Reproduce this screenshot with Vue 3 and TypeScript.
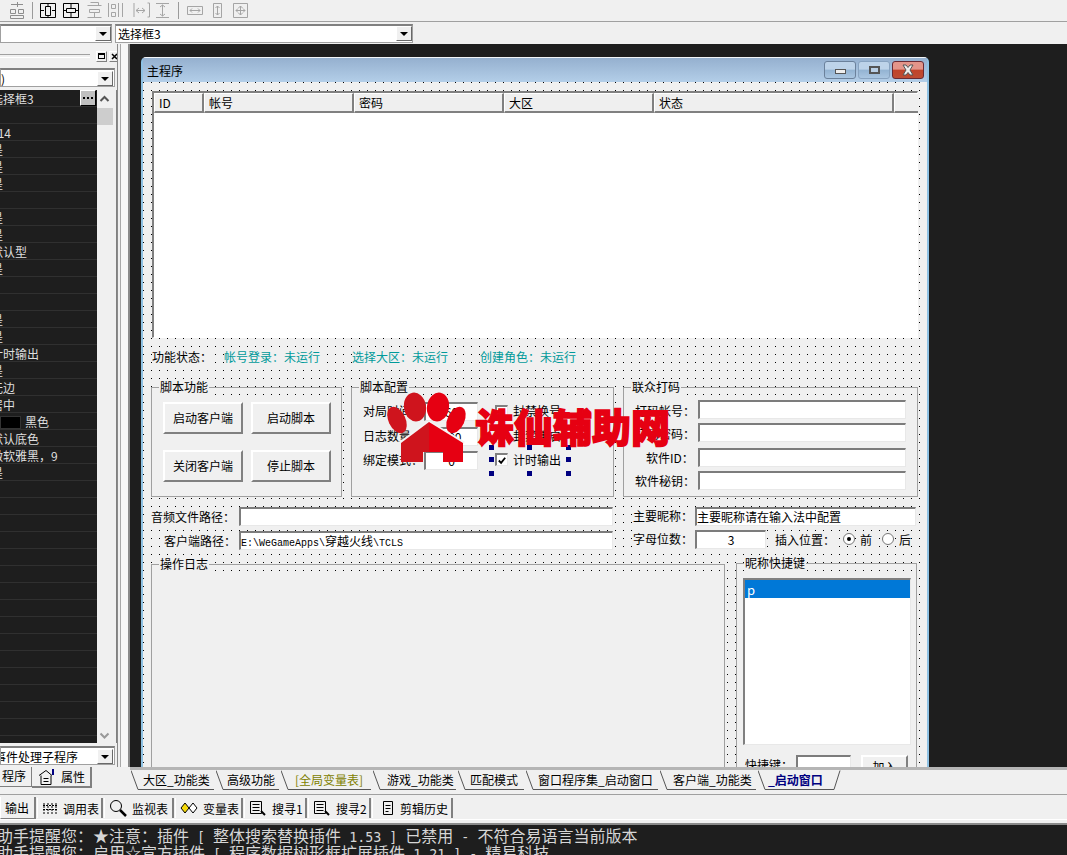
<template>
  <div class="ide">
    <div class="toolbar">
      <div class="tool-row">
        <svg class="tool-icons" width="252" height="21" viewBox="0 0 252 21" fill="none" stroke-width="1">
          <path stroke="#8d8d8d" d="M11 4.500h12M17.500 2v5M10.500 9.500h5v4h-5zM18.500 9.500h5v4h-5zM10.500 15.500h13v3h-13z" />
          <path stroke="#9a9a9a" d="M32.500 2v17M178.500 2v17M252.500 0v21" />
          <path stroke="#000" d="M40.500 3.500h15v14h-15zM45.500 6.500h5v9h-5zM48 3v3M48 15v3M41 10.500h3M52 10.500h3" />
          <path stroke="#000" d="M63.500 3.500h15v14h-15zM66.500 8.500h9v4h-9zM71 4v4M71 13v4M64 10.500h2M76 10.500h2" />
          <path stroke="#a5a5a5" d="M87.500 5.500h14M90.500 2.500h8v3M89.500 9.500h10v3h-10zM87.500 17.500h14M94.500 12v5" />
          <path stroke="#a5a5a5" d="M108.500 3v14M111.500 4.500h4v4h-4zM111.500 12.500h4v4h-4zM118.500 3v14M122.500 3v14" />
          <path stroke="#a5a5a5" d="M134 3v14M136 10.500h9M139 8l-3 2.500 3 2.500M142 8l3 2.500-3 2.500M147.500 3h2v14h-2" />
          <path stroke="#a5a5a5" d="M156 3.500h13M156 17.500h13M162.500 5v11M160 7l2.500-2 2.500 2M160 14l2.500 2 2.500-2" />
          <path stroke="#a5a5a5" d="M187.500 6.500h15v8h-15zM190 10.500h10M192 8.500l-2 2 2 2M198 8.500l2 2-2 2" />
          <path stroke="#a5a5a5" d="M213.500 3.500h8v14h-8zM217.500 6v9M215.500 8l2-2 2 2M215.500 13l2 2 2-2" />
          <path stroke="#a5a5a5" d="M233.500 3.500h14v14h-14zM240.500 6v9M236 10.500h9M238.500 8l2-2 2 2M238.500 13l2 2 2-2M238 8.500l-2 2 2 2M243 8.500l2 2-2 2" />
        </svg>
      </div>
      <div class="combo-row">
        <div class="combo first"><span class="combo-arrow"></span></div>
        <div class="combo second"><span class="combo-text">选择框3</span><span class="combo-arrow"></span></div>
      </div>
    </div>

    <div class="workspace">
      <aside class="side">
        <div class="side-inner">
          <div class="side-title">
            <span class="title-rule"></span>
            <span class="mini-btn"><i class="restore"></i></span>
            <span class="mini-btn close">
              <svg width="7" height="7" viewBox="0 0 7 7" stroke="#000" stroke-width="1.500"><path d="M1 1l5 5M6 1L1 6" /></svg>
            </span>
          </div>
          <div class="combo side-combo"><span class="combo-text clip">)</span><span class="combo-arrow"></span></div>
          <div class="grid-wrap">
            <div class="prop-grid">
              <div v-for="(row, i) in propRows" :key="i" class="prop-row">
                <span v-if="row === '#swatch'" class="swatch-cell"><i class="swatch"></i>黑色</span>
                <span v-else class="prop-val">{{ row }}</span>
              </div>
              <span class="dots-btn">
                <svg width="10" height="3" viewBox="0 0 10 3" fill="#000"><path d="M0 0h2v2H0zM4 0h2v2H4zM8 0h2v2H8z" /></svg>
              </span>
            </div>
            <div class="vscroll">
              <svg width="15" height="18" viewBox="0 0 15 18" fill="none" stroke="#555" stroke-width="2"><path d="M3.500 11l4-4 4 4" /></svg>
              <div class="thumb"></div>
              <div class="vscroll-space"></div>
              <svg width="15" height="14" viewBox="0 0 15 14" fill="none" stroke="#999" stroke-width="2"><path d="M3.500 4.500l4 4 4-4" /></svg>
            </div>
          </div>
          <div class="combo side-combo lower"><span class="combo-text clip">事件处理子程序</span><span class="combo-arrow"></span></div>
          <div class="side-tabs">
            <span class="side-tab">程序</span>
            <span class="side-tab active">
              <svg width="18" height="17" viewBox="0 0 18 17" fill="none" stroke="#000"><path d="M1 7.500L8 2.500l6 5M3 7.500v9h10v-9M5.500 10.500h5M5.500 13.500h5" /><path stroke="#000080" stroke-width="2" d="M15 1v6" /></svg>
              属性
            </span>
          </div>
        </div>
        <div class="splitter"></div>
      </aside>

      <div class="editor">
        <main class="mdi">
          <section class="window">
            <header class="caption">
              <span class="caption-title">主程序</span>
              <span class="caption-btns">
                <span class="cap-btn"><i class="min-glyph"></i></span>
                <span class="cap-btn"><i class="max-glyph"></i></span>
                <span class="cap-btn close-btn"><svg width="14" height="12" viewBox="0 0 14 12"><path d="M2 1h3l2 2.500L9 1h3L9 6l3 5H9L7 8.500 5 11H2l3-5z" fill="#eee" stroke="#555" stroke-width="1" /></svg></span>
              </span>
            </header>

            <div class="form">
              <div class="listview" :style="box(152, 91, 766, 247)">
                <div class="lv-head">
                  <span v-for="c in columns" :key="c.name" class="lv-col" :style="{ width: c.w + 'px' }">{{ c.name }}</span>
                </div>
              </div>

              <fieldset v-for="g in groups" :key="g.t" class="group" :style="box(g.x, g.y, g.w, g.h)">
                <legend>{{ g.t }}</legend>
              </fieldset>

              <span v-for="l in labels" :key="l.t" class="label" :class="{ teal: l.teal }" :style="textAt(l.x, l.y)">{{ l.t }}</span>

              <button v-for="b in buttons" :key="b.t" class="btn" :style="box(b.x, b.y, b.w, b.h)">{{ b.t }}</button>

              <div v-for="(f, i) in fields" :key="i" class="field" :class="f.cls" :style="box(f.x, f.y, f.w, f.h)">
                <template v-if="f.cls === 'mono'">
                  <span v-for="(seg, j) in segments(f.t || '')" :key="j" :class="{ 'mono-latin': seg.latin }">{{ seg.t }}</span>
                </template>
                <template v-else>{{ f.t }}</template>
              </div>

              <span class="check" :style="box(495, 405, 13, 13)"></span>
              <span class="check" :style="box(495, 430, 13, 13)"></span>
              <span class="check" :style="box(495, 453, 13, 13)">
                <svg width="11" height="11" viewBox="0 0 11 11" fill="none" stroke="#000" stroke-width="2"><path d="M2 5.500l2.500 2.500L9 2.500" /></svg>
              </span>
              <i v-for="(h, i) in handles" :key="i" class="handle" :style="box(h[0], h[1], 5, 5)"></i>

              <span class="radio on" :style="box(843, 533, 12, 12)"></span>
              <span class="radio" :style="box(882, 533, 12, 12)"></span>

              <div class="nick-list" :style="box(743, 578, 168, 167)">
                <div class="nick-sel">p</div>
              </div>

              <span class="label" :style="textAt(745, 765)">快捷键：</span>
              <div class="field" :style="box(796, 755, 55, 24)"></div>
              <button class="btn" :style="box(861, 755, 47, 24)">加入</button>
            </div>
          </section>

          <div class="watermark">
            <svg class="paw" width="85" height="75" viewBox="0 0 85 75">
              <ellipse cx="12" cy="30" rx="8.500" ry="14" fill="#cf141d" transform="rotate(-25 12 30)" />
              <ellipse cx="30" cy="17" rx="11" ry="14.500" fill="#cf141d" transform="rotate(-10 30 17)" />
              <ellipse cx="53" cy="17" rx="11" ry="14.500" fill="#e60012" transform="rotate(10 53 17)" />
              <ellipse cx="71" cy="30" rx="8.500" ry="14" fill="#e60012" transform="rotate(25 71 30)" />
              <path fill="none" stroke="#f4f4f4" stroke-width="3" d="M15 53L44 32l35 21" />
              <path fill="#cf141d" d="M44 32L16 53v19h22V62h6z" />
              <path fill="#e60012" d="M44 32l34 21v19H58V62H44z" />
            </svg>
            <span class="mark-text">诛仙辅助网</span>
          </div>
        </main>

        <nav class="file-tabs">
          <span v-for="t in fileTabs" :key="t.t" class="file-tab" :class="t.cls" :style="{ width: t.w + 'px', paddingLeft: t.pad + 'px' }">
            <svg class="tab-edge" :width="t.w + 10" height="21" :viewBox="`0 0 ${t.w + 10} 21`" fill="none" stroke="#555">
              <path :d="t.cls === 'current' ? `M0 .5L7 19.500H${t.w - 4}L${t.w + 2} .5` : `M0 .5L7 19.500H${t.w - 2}`" />
            </svg>
            <b>{{ t.t }}</b>
          </span>
        </nav>
      </div>
    </div>

    <div class="out-gap"></div>

    <nav class="out-tabs">
      <span class="out-tab active" style="width: 36px">输出</span>
      <span class="out-tab" style="width: 66px">
        <svg width="16" height="16" viewBox="0 0 16 16" stroke="#000" fill="none"><path d="M2 3v11M6 3v11M10 3v11M14 3v11M1 5.500h14M1 9.500h14" stroke-dasharray="2 1" /></svg>
        调用表
      </span>
      <span class="out-tab" style="width: 70px">
        <svg width="18" height="18" viewBox="0 0 18 18" fill="none" stroke="#000"><circle cx="7" cy="7" r="5.500" /><path stroke-width="2.500" d="M11 11l6 6" /></svg>
        监视表
      </span>
      <span class="out-tab" style="width: 68px">
        <svg width="18" height="14" viewBox="0 0 18 14" stroke="#000"><path fill="#f5d90a" d="M1 7l4-5 4 5-4 5z" /><path fill="#fff" d="M9 7l4-5 4 5-4 5z" /></svg>
        变量表
      </span>
      <span class="out-tab" style="width: 63px">
        <svg width="18" height="16" viewBox="0 0 18 16" fill="none" stroke="#000"><path d="M1.500 1.500h11v12h-11zM3.500 4.500h7M3.500 7.500h7M3.500 10.500h7" /><path stroke-width="2" d="M12 11l4 4" /></svg>
        搜寻1
      </span>
      <span class="out-tab" style="width: 63px">
        <svg width="18" height="16" viewBox="0 0 18 16" fill="none" stroke="#000"><path d="M1.500 1.500h11v12h-11zM3.500 4.500h7M3.500 7.500h7M3.500 10.500h7" /><path stroke-width="2" d="M12 11l4 4" /></svg>
        搜寻2
      </span>
      <span class="out-tab last" style="width: 81px">
        <svg width="14" height="16" viewBox="0 0 14 16" fill="none" stroke="#000"><path d="M2.500 1.500h9v13h-9zM4.500 5.500h5M4.500 8.500h5M4.500 11.500h3" /></svg>
        剪辑历史
      </span>
    </nav>

    <div class="output">
      <div v-for="(line, i) in outputLines" :key="i" class="out-line">
        <span v-for="(seg, j) in line" :key="j" :class="{ latin: seg.latin }">{{ seg.t }}</span>
      </div>
    </div>
  </div>
</template>

<script setup lang="ts">
// form controls are placed in screen coords, the form's client origin is 143,82
const ORIGIN_X = 143
const ORIGIN_Y = 82

function box(x: number, y: number, w: number, h: number) {
  return {
    left: x - ORIGIN_X + 'px',
    top: y - ORIGIN_Y + 'px',
    width: w + 'px',
    height: h + 'px',
  }
}

function textAt(x: number, y: number) {
  return { left: x - ORIGIN_X + 'px', top: y - ORIGIN_Y - 9 + 'px' }
}

const columns = [
  { name: 'ID', w: 50 },
  { name: '帐号', w: 150 },
  { name: '密码', w: 150 },
  { name: '大区', w: 150 },
  { name: '状态', w: 240 },
  { name: '', w: 24 },
]

const labels = [
  { x: 152, y: 357, t: '功能状态：' },
  { x: 224, y: 357, t: '帐号登录：未运行', teal: true },
  { x: 352, y: 357, t: '选择大区：未运行', teal: true },
  { x: 480, y: 357, t: '创建角色：未运行', teal: true },
  { x: 363, y: 411, t: '对局时间：' },
  { x: 363, y: 436, t: '日志数量：' },
  { x: 363, y: 460, t: '绑定模式：' },
  { x: 513, y: 411, t: '封禁换号' },
  { x: 513, y: 436, t: '封禁重启' },
  { x: 513, y: 460, t: '计时输出' },
  { x: 635, y: 411, t: '打码帐号：' },
  { x: 635, y: 434, t: '打码密码：' },
  { x: 646, y: 458, t: '软件ID：' },
  { x: 635, y: 481, t: '软件秘钥：' },
  { x: 151, y: 517, t: '音频文件路径：' },
  { x: 164, y: 541, t: '客户端路径：' },
  { x: 633, y: 516, t: '主要昵称：' },
  { x: 633, y: 539, t: '字母位数：' },
  { x: 775, y: 540, t: '插入位置：' },
  { x: 860, y: 540, t: '前' },
  { x: 899, y: 540, t: '后' },
]

const groups = [
  { x: 151, y: 379, w: 191, h: 118, t: '脚本功能' },
  { x: 351, y: 379, w: 263, h: 118, t: '脚本配置' },
  { x: 623, y: 379, w: 295, h: 118, t: '联众打码' },
  { x: 151, y: 556, w: 574, h: 300, t: '操作日志' },
  { x: 736, y: 555, w: 181, h: 300, t: '昵称快捷键' },
]

const buttons = [
  { x: 163, y: 402, w: 80, h: 32, t: '启动客户端' },
  { x: 251, y: 402, w: 80, h: 32, t: '启动脚本' },
  { x: 163, y: 450, w: 80, h: 32, t: '关闭客户端' },
  { x: 251, y: 450, w: 80, h: 32, t: '停止脚本' },
]

const fields: { x: number; y: number; w: number; h: number; t?: string; cls?: string }[] = [
  { x: 424, y: 402, w: 54, h: 19, t: '60', cls: 'center' },
  { x: 424, y: 427, w: 54, h: 19, t: '500', cls: 'center' },
  { x: 424, y: 451, w: 54, h: 19, t: '0', cls: 'center' },
  { x: 698, y: 400, w: 208, h: 19 },
  { x: 698, y: 423, w: 208, h: 19 },
  { x: 698, y: 448, w: 208, h: 19 },
  { x: 698, y: 471, w: 208, h: 19 },
  { x: 239, y: 507, w: 374, h: 19 },
  { x: 239, y: 531, w: 374, h: 19, t: 'E:\\WeGameApps\\穿越火线\\TCLS', cls: 'mono' },
  { x: 695, y: 507, w: 221, h: 19, t: '主要昵称请在输入法中配置' },
  { x: 695, y: 530, w: 71, h: 19, t: '3', cls: 'center' },
]

const handles = [
  [489, 445], [527, 445], [566, 445],
  [489, 457], [566, 457],
  [489, 471], [527, 471], [566, 471],
]

const propRows = [
  '选择框3', '', '114', '是', '是', '是', '', '是', '是', '默认型', '是', '', '', '是', '是',
  '计时输出', '是', '无边', '居中', '#swatch', '默认底色', '微软雅黑，9', '是',
  ...Array.from({ length: 16 }, () => ''),
]

const fileTabs = [
  { t: '大区_功能类', w: 85, pad: 12, cls: '' },
  { t: '高级功能', w: 65, pad: 11, cls: '' },
  { t: '[全局变量表]', w: 92, pad: 14, cls: 'globals' },
  { t: '游戏_功能类', w: 85, pad: 14, cls: '' },
  { t: '匹配模式', w: 68, pad: 12, cls: '' },
  { t: '窗口程序集_启动窗口', w: 134, pad: 12, cls: '' },
  { t: '客户端_功能类', w: 98, pad: 13, cls: '' },
  { t: '_启动窗口', w: 80, pad: 10, cls: 'current' },
]

// console text sits on an 8px cell grid, so ascii runs get their own mono face
function segments(text: string) {
  return (text.match(/[\x20-\x7e]+|[^\x20-\x7e]+/g) || []).map((t) => ({
    t,
    latin: /^[\x20-\x7e]/.test(t),
  }))
}

const outputLines = [
  '助手提醒您：★注意：插件 [ 整体搜索替换插件 1.53 ] 已禁用 - 不符合易语言当前版本',
  '助手提醒您：启用☆宣方插件 [ 程序数据树形框扩展插件 1.21 ] - 精易科技',
].map(segments)
</script>

<style scoped>
.ide {
  width: 1067px;
  height: 855px;
  overflow: hidden;
  display: flex;
  flex-direction: column;
  background: #f0f0f0;
  font-family: "Noto Sans CJK SC", "Liberation Sans", sans-serif;
  font-size: 12px;
  color: #000;
}

.tool-row {
  height: 22px;
  border-bottom: 1px solid #a0a0a0;
  box-sizing: border-box;
}

.tool-icons {
  display: block;
}

.combo-row {
  height: 22px;
  display: flex;
  gap: 3px;
  align-items: center;
}

.combo {
  box-sizing: border-box;
  height: 19px;
  background: #fff;
  border: 1px solid #a0a0a0;
  border-top: 2px solid #808080;
  display: flex;
  align-items: center;
  justify-content: space-between;
  padding-left: 2px;
  overflow: hidden;
}

.combo.first {
  width: 112px;
  justify-content: flex-end;
}

.combo.second {
  width: 298px;
}

.combo-text {
  white-space: nowrap;
}

.combo-arrow {
  flex: none;
  margin-left: auto;
  width: 16px;
  height: 15px;
  box-sizing: border-box;
  background: #f0f0f0;
  border: 1px solid;
  border-color: #fff #696969 #696969 #fff;
  position: relative;
}

.combo-arrow::after {
  content: "";
  position: absolute;
  left: 3px;
  top: 5px;
  border: 4px solid transparent;
  border-top: 4px solid #000;
  border-bottom: 0;
}

.workspace {
  flex: none;
  height: 746px;
  display: flex;
  overflow: hidden;
}

.side {
  width: 130px;
  flex: none;
  display: flex;
}

.side-inner {
  width: 117px;
  flex: none;
  box-sizing: border-box;
  display: flex;
  flex-direction: column;
}

.splitter {
  flex: 1;
  height: 723px;
  border-left: 1px solid #8a8a8a;
  border-right: 2px solid #8a8a8a;
  box-sizing: border-box;
  background: linear-gradient(90deg, #f0f0f0 20%, #a8a8a8 20%, #a8a8a8 28%, #f6f6f6 28%);
}

.side-title {
  height: 24px;
  flex: none;
  display: flex;
  align-items: center;
  gap: 2px;
}

.title-rule {
  flex: 1;
  height: 2px;
  border-top: 1px solid #a0a0a0;
  border-bottom: 1px solid #fff;
  margin-right: 4px;
}

.mini-btn {
  flex: none;
  width: 11px;
  height: 11px;
  box-sizing: border-box;
  border: 1px solid;
  border-color: #fff #808080 #808080 #fff;
  display: flex;
  align-items: center;
  justify-content: center;
}

.mini-btn.close {
  margin-right: -3px;
}

.restore {
  width: 7px;
  height: 6px;
  box-sizing: border-box;
  border: 1px solid #000;
  border-top-width: 2px;
}

.side-combo {
  width: 115px;
  height: 19px;
  flex: none;
}

.side-combo .combo-arrow {
  margin-right: 1px;
}

.clip {
  margin-left: -2px;
}

.lower .clip {
  margin-left: -9px;
}

.grid-wrap {
  flex: none;
  height: 653px;
  margin-top: 3px;
  width: 117px;
  display: flex;
  border-right: 1px solid #808080;
  box-sizing: border-box;
}

.prop-grid {
  width: 97px;
  flex: none;
  background: #1e1e1e;
  overflow: hidden;
  position: relative;
}

.prop-row {
  height: 17px;
  box-sizing: border-box;
  border-bottom: 1px solid #303030;
  color: #dedede;
  line-height: 18px;
  white-space: nowrap;
}

.prop-val {
  margin-left: -9px;
}

.swatch-cell {
  display: flex;
  align-items: center;
  gap: 4px;
}

.swatch {
  width: 19px;
  height: 11px;
  background: #000;
  border: 1px solid #333;
}

.dots-btn {
  position: absolute;
  right: 1px;
  top: 0;
  width: 16px;
  height: 16px;
  background: #c0c0c0;
  border: 1px solid #fff;
  border-right-color: #000;
  border-bottom-color: #000;
  box-sizing: border-box;
  display: flex;
  align-items: center;
  justify-content: center;
}

.vscroll {
  flex: none;
  width: 16px;
  display: flex;
  flex-direction: column;
  background: #f0f0f0;
}

.vscroll svg {
  display: block;
  flex: none;
}

.thumb {
  height: 17px;
  background: #cdcdcd;
  flex: none;
}

.vscroll-space {
  flex: 1;
}

.side-combo.lower {
  margin-top: 3px;
}

.side-tabs {
  display: flex;
  margin-top: 2px;
  align-items: flex-start;
}

.side-tab {
  height: 20px;
  width: 32px;
  box-sizing: border-box;
  line-height: 18px;
  text-align: right;
  padding-right: 5px;
  border-right: 1px solid #808080;
  border-bottom: 1px solid #808080;
}

.side-tab.active {
  width: 60px;
  height: 21px;
  display: flex;
  align-items: center;
  gap: 5px;
  padding: 0 0 0 6px;
  border-right-width: 2px;
  border-bottom-width: 2px;
}

.editor {
  flex: 1;
  min-width: 0;
  display: flex;
  flex-direction: column;
}

.mdi {
  flex: none;
  height: 723px;
  background: #1e1e1e;
  padding: 13px 0 0 11px;
  box-sizing: border-box;
  position: relative;
  overflow: hidden;
}

.window {
  width: 788px;
  height: 760px;
  box-sizing: border-box;
  background: #f0f0f0;
  border: 2px solid #8fc2e4;
  border-top: 1px solid #f4f7fa;
  border-radius: 5px 5px 0 0;
  display: flex;
  flex-direction: column;
}

.caption {
  height: 24px;
  flex: none;
  background: linear-gradient(#95b0cf, #b3cee8);
  display: flex;
  align-items: center;
  justify-content: space-between;
  padding-left: 4px;
}

.caption-title {
  color: #000;
  font-size: 12px;
}

.caption-btns {
  display: flex;
  gap: 2px;
  margin-top: -1px;
  padding-right: 3px;
}

.cap-btn {
  width: 32px;
  height: 18px;
  box-sizing: border-box;
  border: 1px solid #6b819b;
  border-radius: 3px;
  background: linear-gradient(#bdd3e9 45%, #93b3d2 50%, #aac6e1);
  display: flex;
  align-items: center;
  justify-content: center;
}

.cap-btn:nth-child(2) {
  border-color: #88a3c0;
}

.close-btn {
  border-color: #6a2a33;
  background: linear-gradient(#e3958a 45%, #c0432a 50%, #bd4c33);
}

.min-glyph {
  width: 11px;
  height: 5px;
  margin-top: 3px;
  box-sizing: border-box;
  background: #eee;
  border: 1px solid #555;
}

.max-glyph {
  width: 11px;
  height: 8px;
  box-sizing: border-box;
  border: 2px solid #555;
  background: #b9cfe5;
}

.form {
  flex: 1;
  position: relative;
  background-color: #f0f0f0;
  background-image: conic-gradient(from 270deg at 1px 1px, #000 25%, transparent 0);
  background-size: 8px 8px;
}

.listview {
  position: absolute;
  box-sizing: border-box;
  background: #fff;
  border: 1px solid #fff;
  border-top: 2px solid #808080;
  border-left: 2px solid #808080;
}

.lv-head {
  display: flex;
  height: 20px;
}

.lv-col {
  box-sizing: border-box;
  height: 20px;
  flex: none;
  background: #efefef;
  border-right: 2px solid #808080;
  border-bottom: 2px solid #808080;
  border-left: 1px solid #fff;
  border-top: 1px solid #fff;
  padding-left: 4px;
  line-height: 18px;
}

.lv-col:last-child {
  border-right: 0;
}

.label {
  position: absolute;
  white-space: nowrap;
  line-height: 18px;
  background: #f0f0f0;
}

.teal {
  color: #009a9a;
}

.group {
  position: absolute;
  box-sizing: border-box;
  margin: 0;
  padding: 0 0 0 7px;
  border: 1px solid #a0a0a0;
  border-radius: 0;
  background: linear-gradient(transparent 8px, #f0f0f0 8px);
  min-width: 0;
}

.group legend {
  padding: 0 1px;
  line-height: 16px;
  font-size: 12px;
  background: #f0f0f0;
}

.btn {
  position: absolute;
  padding: 0 0 2px;
  margin: 0;
  font: inherit;
  color: #000;
  background: #f0f0f0;
  border: 2px solid;
  border-color: #fff #808080 #808080 #fff;
}

.field {
  position: absolute;
  box-sizing: border-box;
  background: #fff;
  border: 1px solid #e8e8e8;
  border-top: 2px solid #7c7c7c;
  border-left: 2px solid #7c7c7c;
  line-height: 15px;
  white-space: nowrap;
  overflow: hidden;
}

.field.center {
  text-align: center;
}

.mono-latin {
  font-family: "Liberation Mono", monospace;
  font-size: 10px;
}

.check {
  position: absolute;
  box-sizing: border-box;
  background: #fff;
  border: 1px solid #e8e8e8;
  border-top: 2px solid #808080;
  border-left: 2px solid #808080;
  display: flex;
  align-items: center;
  justify-content: center;
}

.handle {
  position: absolute;
  background: #000080;
}

.radio {
  position: absolute;
  box-sizing: border-box;
  border-radius: 50%;
  background: #fff;
  border: 1px solid #777;
}

.radio.on::after {
  content: "";
  position: absolute;
  left: 3px;
  top: 3px;
  width: 4px;
  height: 4px;
  border-radius: 50%;
  background: #000;
}

.nick-list {
  position: absolute;
  box-sizing: border-box;
  background: #fff;
  border: 1px solid #e8e8e8;
  border-top: 2px solid #808080;
  border-left: 2px solid #808080;
}

.nick-sel {
  height: 18px;
  background: #0078d7;
  color: #fff;
  line-height: 19px;
  font-size: 13px;
  padding-left: 2px;
}

.watermark {
  position: absolute;
  left: 255px;
  top: 346px;
  display: flex;
  align-items: center;
  gap: 5px;
  pointer-events: none;
}

.paw {
  display: block;
  flex: none;
}

.mark-text {
  color: #e60012;
  font-size: 39px;
  font-weight: 900;
  line-height: 1;
  -webkit-text-stroke: 1.5px #e60012;
  white-space: nowrap;
  margin-top: -4px;
}

.file-tabs {
  flex: none;
  height: 23px;
  box-sizing: border-box;
  border-top: 3px solid #b5b5b5;
  padding-left: 1px;
  display: flex;
}

.file-tab {
  position: relative;
  flex: none;
  box-sizing: border-box;
  line-height: 20px;
  white-space: nowrap;
}

.file-tab b {
  font-weight: 400;
  position: relative;
}

.tab-edge {
  position: absolute;
  left: 0;
  top: 0;
}

.globals {
  color: #808000;
}

.current {
  color: #000080;
}

.current b {
  font-weight: 700;
}

.out-gap {
  flex: none;
  height: 5px;
  border-bottom: 1px solid #a0a0a0;
  box-sizing: border-box;
}

.out-tabs {
  flex: none;
  height: 25px;
  margin-bottom: 3px;
  display: flex;
  align-items: flex-start;
  gap: 1px;
  padding-top: 3px;
  box-sizing: border-box;
  border-bottom: 1px solid #fff;
}

.out-tab {
  flex: none;
  box-sizing: border-box;
  height: 20px;
  display: flex;
  align-items: center;
  gap: 5px;
  padding-left: 4px;
  border-right: 2px solid #808080;
  border-left: 1px solid #fff;
  white-space: nowrap;
}

.out-tab.active {
  height: 22px;
  margin-top: -1px;
  border-bottom: 1px solid #808080;
}

.out-tab.last svg {
  margin-left: 4px;
}

.output {
  flex: 1;
  background: #1e1e1e;
  border-top: 2px solid #8a8a8a;
  overflow: hidden;
  padding-top: 2px;
  color: #d6d6d6;
  font-size: 16px;
  line-height: 17px;
  white-space: pre;
}

.out-line {
  margin-left: -3px;
  height: 17px;
}

.latin {
  font-family: "DejaVu Sans Mono", monospace;
  font-size: 13.33px;
}
</style>

<style>
html,
body {
  margin: 0;
  background: #f0f0f0;
}
</style>
